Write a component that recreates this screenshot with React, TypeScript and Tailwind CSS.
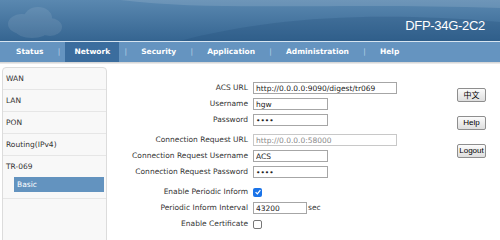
import React from "react";

const tabs = ["Status", "Network", "Security", "Application", "Administration", "Help"];
const menu = ["WAN", "LAN", "PON", "Routing(IPv4)"];

const Field = ({ label, children }: { label: string; children: React.ReactNode }) => (
  <div className="flex items-center h-[16px]">
    <div className="w-[146px] text-right pr-[5px] text-[#333] whitespace-nowrap">{label}</div>
    <div className="flex items-center">{children}</div>
  </div>
);

const TextBox = ({ value, w, type = "text", dim = false }: { value: string; w: string; type?: string; dim?: boolean }) => (
  <input
    type={type}
    readOnly
    defaultValue={value}
    className={`${w} h-[12px] px-[2px] border outline-none bg-white text-[7.5px] leading-none ${
      dim ? "border-[#c8c8c8] text-[#8a8a8a]" : "border-[#a6a6a6] text-[#222]"
    }`}
    style={{ fontFamily: "'DejaVu Sans', sans-serif" }}
  />
);

const Check = ({ on }: { on: boolean }) =>
  on ? (
    <span className="w-[9px] h-[9px] rounded-[2px] bg-[#1a73e8] flex items-center justify-center">
      <svg viewBox="0 0 10 10" className="w-[8px] h-[8px]">
        <path d="M2 5.2 L4.2 7.3 L8 2.6" fill="none" stroke="white" strokeWidth="1.6" />
      </svg>
    </span>
  ) : (
    <span className="w-[9px] h-[9px] rounded-[2px] border border-[#777] bg-white" />
  );

const SideButton = ({ children, cjk = false }: { children: React.ReactNode; cjk?: boolean }) => (
  <button
    className="w-[29px] h-[14px] flex items-center justify-center border border-[#8e8e8e] rounded-[2px] bg-gradient-to-b from-[#fbfbfb] to-[#dedede] text-[8px] text-black leading-none"
    style={{ fontFamily: cjk ? "'Noto Sans CJK SC', sans-serif" : "'Liberation Sans', Arial, sans-serif" }}
  >
    {children}
  </button>
);

export default function App() {
  return (
    <div
      className="w-[500px] h-[240px] overflow-hidden bg-white text-[7.5px]"
      style={{ fontFamily: "'DejaVu Sans', Verdana, sans-serif" }}
    >
      {/* Header banner */}
      <div className="relative h-[41px] bg-gradient-to-b from-[#5a88b0] to-[#356591] flex items-end justify-end pr-[15px] pb-[9px] overflow-hidden">
        <svg className="absolute inset-0" width="500" height="41" viewBox="0 0 500 41">
          <path d="M120 0 C220 12 330 2 500 8 L500 0 Z" fill="white" opacity="0.12" />
          <path d="M180 41 C260 20 360 10 500 22 L500 41 Z" fill="#1f4d78" opacity="0.25" />
          <g fill="white" opacity="0.09">
            <ellipse cx="22" cy="24" rx="14" ry="10" />
            <ellipse cx="38" cy="18" rx="14" ry="11" />
            <ellipse cx="50" cy="27" rx="12" ry="9" />
            <ellipse cx="32" cy="31" rx="16" ry="7" />
          </g>
        </svg>
        <span
          className="relative text-white text-[13px] leading-none tracking-[-0.3px]"
          style={{ fontFamily: "'Liberation Sans', Arial, sans-serif" }}
        >
          DFP-34G-2C2
        </span>
      </div>

      {/* Main nav */}
      <div className="h-[21px] border-t border-[#d6e4f0] bg-[#6594c0] flex items-stretch pl-[7px] text-white font-bold">
        {tabs.map((t, i) => (
          <React.Fragment key={t}>
            {i > 0 && (
              <span className="w-[13px] flex items-center justify-center font-normal text-[#b9d0e4]">|</span>
            )}
            <span className={`px-[9px] flex items-center ${t === "Network" ? "bg-[#3b6d9e]" : ""}`}>{t}</span>
          </React.Fragment>
        ))}
      </div>
      <div className="h-[2px] bg-gradient-to-b from-[#cfcfcf] to-[#f2f2f2]" />

      <div className="flex">
        {/* Side menu */}
        <div className="ml-[2px] mt-[3px] w-[105px] h-[180px] border border-[#dcdcdc] rounded-t-[4px] bg-[#f8f8f8] text-[#333]">
          {menu.map((m) => (
            <div key={m} className="h-[22px] flex items-center pl-[3px] border-b border-[#e6e6e6]">
              {m}
            </div>
          ))}
          <div className="border-b border-[#e6e6e6] pb-[6px]">
            <div className="h-[21px] flex items-center pl-[3px]">TR-069</div>
            <div className="ml-[11px] mr-[2px] h-[15px] bg-[#6393bf] text-white flex items-center pl-[3px]">Basic</div>
          </div>
        </div>

        {/* Form */}
        <div className="flex-1 pt-[16px]">
          <Field label="ACS URL">
            <TextBox value="http://0.0.0.0:9090/digest/tr069" w="w-[144px]" />
          </Field>
          <Field label="Username">
            <TextBox value="hgw" w="w-[75px]" />
          </Field>
          <Field label="Password">
            <TextBox value="abcd" type="password" w="w-[75px]" />
          </Field>
          <div className="mt-[4px]">
            <Field label="Connection Request URL">
              <TextBox value="http://0.0.0.0:58000" w="w-[144px]" dim />
            </Field>
            <Field label="Connection Request Username">
              <TextBox value="ACS" w="w-[75px]" />
            </Field>
            <Field label="Connection Request Password">
              <TextBox value="abcd" type="password" w="w-[75px]" />
            </Field>
          </div>
          <div className="mt-[4px]">
            <Field label="Enable Periodic Inform">
              <Check on />
            </Field>
            <Field label="Periodic Inform Interval">
              <TextBox value="43200" w="w-[54px]" />
              <span className="ml-[1px] text-[#333]">sec</span>
            </Field>
            <Field label="Enable Certificate">
              <Check on={false} />
            </Field>
          </div>
        </div>

        {/* Right buttons */}
        <div className="mr-[14px] pt-[24px] flex flex-col gap-[14px]">
          <SideButton cjk>中文</SideButton>
          <SideButton>Help</SideButton>
          <SideButton>Logout</SideButton>
        </div>
      </div>
    </div>
  );
}
